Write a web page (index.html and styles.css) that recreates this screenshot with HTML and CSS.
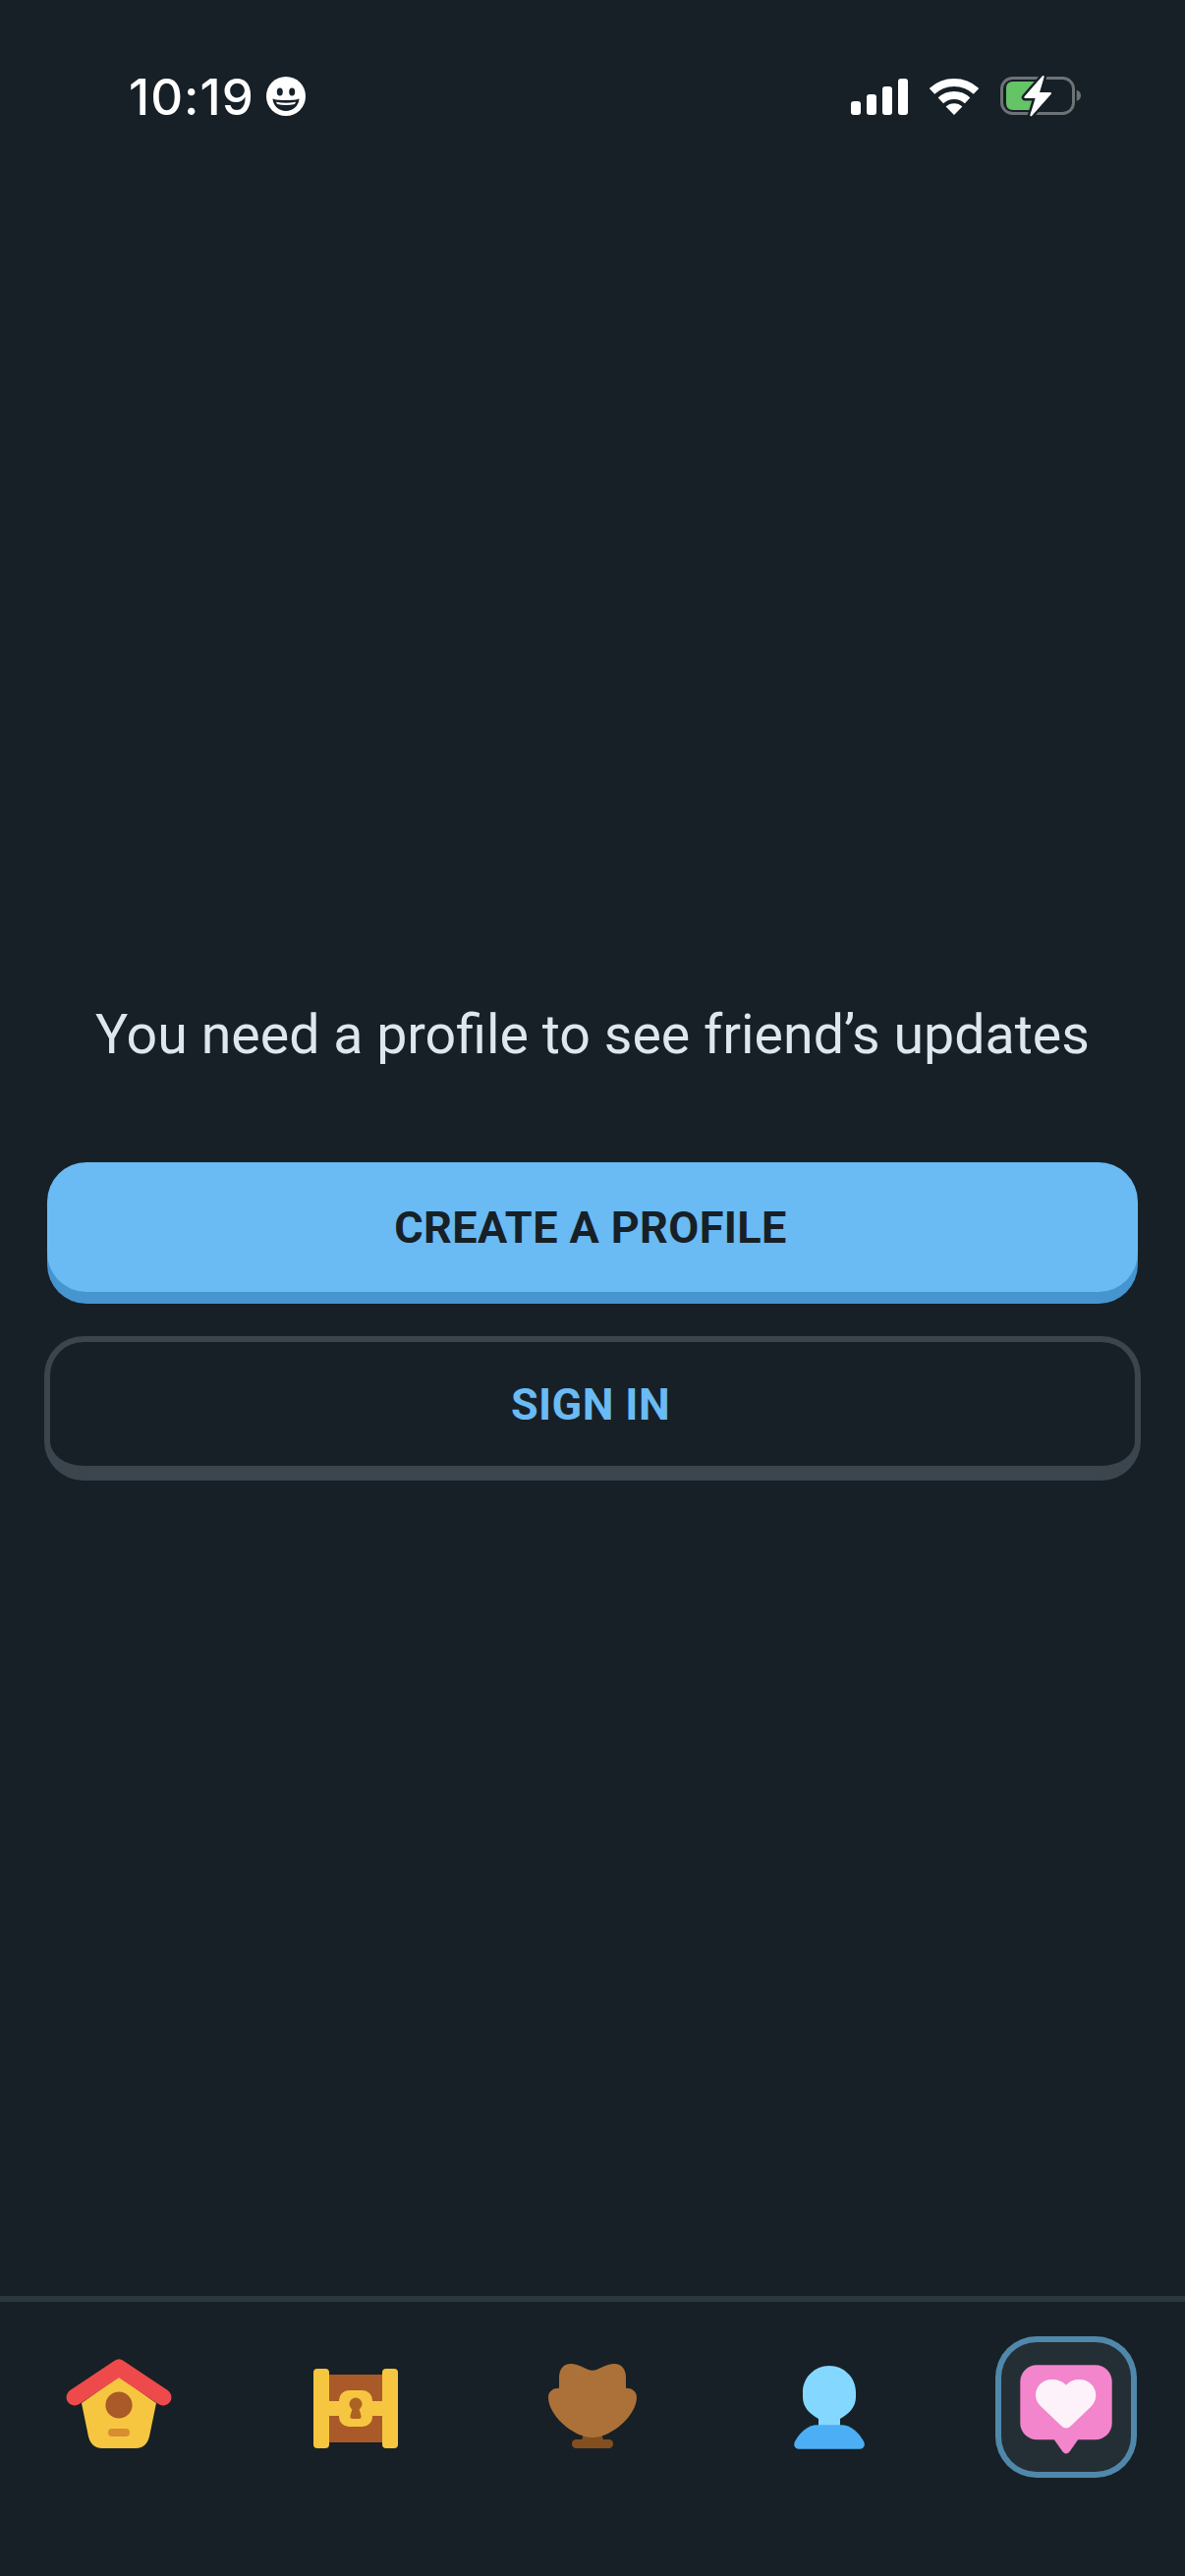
FILE: index.html
```html
<!DOCTYPE html>
<html lang="en">
<head>
    <meta charset="UTF-8">
    <meta name="viewport" content="width=device-width, initial-scale=1.0">
    <title>Friends</title>
    <link rel="stylesheet" href="styles.css">
</head>
<body>
    <div class="screen">
        <header class="status-bar">
            <div class="status-left">
                <span class="clock">10:19</span>
                <svg class="smiley" width="40" height="40" viewBox="0 0 40 40">
                    <circle cx="20" cy="20" r="20" fill="#fff"/>
                    <ellipse cx="13.8" cy="15.5" rx="3" ry="4" fill="#172026"/>
                    <ellipse cx="26.2" cy="15.5" rx="3" ry="4" fill="#172026"/>
                    <path d="M6.5 22.5C11 24.5 29 24.5 33.5 22.5C33 30 27 35 20 35C13 35 7 30 6.5 22.5Z" fill="#172026"/>
                    <path d="M10 25.8Q20 27.6 30 25.8L29 28Q20 30 11 28Z" fill="#fff"/>
                </svg>
            </div>
            <div class="status-right">
                <svg width="58" height="37" viewBox="0 0 58 37">
                    <rect x="0" y="23" width="10" height="14" rx="3" fill="#fff"/>
                    <rect x="16" y="16" width="10" height="21" rx="3" fill="#fff"/>
                    <rect x="32" y="8" width="10" height="29" rx="3" fill="#fff"/>
                    <rect x="48" y="0" width="10" height="37" rx="3" fill="#fff"/>
                </svg>
                <svg width="50" height="37" viewBox="0 0 50 37">
                    <path d="M2.5 12.9A33 33 0 0 1 47.5 12.9" fill="none" stroke="#fff" stroke-width="8"/>
                    <path d="M11.4 22.4A20 20 0 0 1 38.6 22.4" fill="none" stroke="#fff" stroke-width="8"/>
                    <path d="M25 37L16.6 28.6A11.9 11.9 0 0 1 33.4 28.6Z" fill="#fff"/>
                </svg>
                <svg class="battery" width="82" height="40" viewBox="0 0 82 40">
                    <rect x="1.5" y="1.5" width="73" height="36" rx="11" fill="none" stroke="#6c7276" stroke-width="3"/>
                    <path d="M77.7 13.7C80.5 14.5 82 16.5 82 19.2C82 22 80.5 24 77.7 24.7Z" fill="#6c7276"/>
                    <path d="M6 12Q6 5 13 5H36V34H13Q6 34 6 27Z" fill="#64c466"/>
                    <path d="M43.7 0L25.3 21H37L31.3 39.3L51 17H38.7Z" fill="#172026" stroke="#172026" stroke-width="7" stroke-linejoin="round"/>
                    <path d="M43.7 0L25.3 21H37L31.3 39.3L51 17H38.7Z" fill="#fff" stroke="#fff" stroke-width="2" stroke-linejoin="round"/>
                </svg>
            </div>
        </header>

        <main class="content">
            <p class="message">You need a profile to see friend’s updates</p>
            <button class="btn btn-primary">CREATE A PROFILE</button>
            <button class="btn btn-secondary">SIGN IN</button>
        </main>

        <nav class="tab-bar">
            <div class="tab">
                <svg width="144" height="144" viewBox="0 0 144 144">
                    <path d="M34 68L72 41L110 68L103 102Q100 114 89 114H55Q44 114 41 102Z" fill="#f7c640"/>
                    <path d="M27 62L72 32L117 62" fill="none" stroke="#ee4a4c" stroke-width="17" stroke-linecap="round" stroke-linejoin="round"/>
                    <circle cx="72" cy="70" r="13.6" fill="#a95a28"/>
                    <rect x="61" y="94" width="22" height="8" rx="4" fill="#d98c30"/>
                </svg>
            </div>
            <div class="tab">
                <svg width="144" height="144" viewBox="0 0 144 144">
                    <rect x="40" y="39" width="64" height="69" fill="#a95a28"/>
                    <rect x="40" y="66" width="64" height="15" fill="#f7c640"/>
                    <rect x="29" y="33" width="16" height="81" rx="4" fill="#f7c640"/>
                    <rect x="99" y="33" width="16" height="81" rx="4" fill="#f7c640"/>
                    <rect x="55" y="55" width="34" height="37" rx="10" fill="#f7c640"/>
                    <circle cx="72" cy="69" r="6.5" fill="#ac6322"/>
                    <path d="M69 72H75L77.5 81Q78 84 75 84H69Q66 84 66.5 81Z" fill="#ac6322"/>
                </svg>
            </div>
            <div class="tab">
                <svg width="144" height="144" viewBox="0 0 144 144">
                    <path d="M63.5 96H80.5L83 106H61Z" fill="#844f1e"/>
                    <rect x="51" y="105" width="42" height="9" rx="4.5" fill="#844f1e"/>
                    <path d="M72 34.7C66 34.7 58 28 50 28C42 28 38 34 38 42V52.7C32 52.7 27 56 27 62C27 80 52 103 72 103C92 103 117 80 117 62C117 56 112 52.7 106 52.7V42C106 34 102 28 94 28C86 28 78 34.7 72 34.7Z" fill="#ac7138"/>
                </svg>
            </div>
            <div class="tab">
                <svg width="144" height="144" viewBox="0 0 144 144">
                    <path d="M72 30C57 30 45 42 45 57V62C45 72 52 79 61 84V92H83V84C92 79 99 72 99 62V57C99 42 87 30 72 30Z" fill="#84d8ff"/>
                    <path d="M60 90.3H84C94 90.3 102 98 107 107C109 111 107 114.7 103 114.7H41C37 114.7 35 111 37 107C42 98 50 90.3 60 90.3Z" fill="#4cafF5"/>
                </svg>
            </div>
            <div class="tab tab-active">
                <svg width="144" height="144" viewBox="0 0 144 144">
                    <rect x="25.3" y="29.3" width="93.4" height="76" rx="17" fill="#f285cc"/>
                    <path d="M59.7 105L68.5 117.5Q72 121.5 75.5 117.5L84.3 105Z" fill="#f285cc"/>
                    <path d="M72 49.7C75 46 80 44 86 44C95 44 102.3 51 102.3 60C102.3 65 100 69 97 72L77 91Q72 96 67 91L47 72C44 69 41 65 41 60C41 51 48 44 57 44C63 44 69 46 72 49.7Z" fill="#fef2fa"/>
                </svg>
            </div>
        </nav>
    </div>
</body>
</html>
```

FILE: styles.css
```css
body {
    margin: 0;
    background: #172026;
}
.screen {
    width: 1206px;
    height: 2622px;
    display: flex;
    flex-direction: column;
    overflow: hidden;
}

/* status bar */
.status-bar {
    height: 196px;
    box-sizing: border-box;
    padding: 0 106px 0 131px;
    display: flex;
    justify-content: space-between;
    align-items: center;
}
.status-left {
    display: flex;
    align-items: center;
    gap: 12px;
}
.clock {
    font-family: Inter, sans-serif;
    font-size: 51px;
    font-weight: 500;
    letter-spacing: 1px;
    color: #fff;
}
.status-right {
    display: flex;
    align-items: center;
    gap: 22px;
}
.battery {
    overflow: visible;
}

/* middle */
.content {
    flex: 1;
    padding: 822px 45px 0;
    display: flex;
    flex-direction: column;
}
.message {
    margin: 0 0 93px;
    font-family: Roboto, sans-serif;
    font-size: 55.5px;
    line-height: 72px;
    color: #dfe6ee;
    text-align: center;
}
.btn {
    padding: 0 4px 0 0;
    font-family: Roboto, sans-serif;
    font-size: 45px;
    font-weight: 700;
    letter-spacing: 0.4px;
    border-radius: 40px;
}
.btn-primary {
    height: 132px;
    margin: 0 3px 45px;
    border: none;
    background: #6abaf4;
    color: #172026;
    box-shadow: 0 12px 0 #4695d0;
}
.btn-secondary {
    height: 147px;
    border: 6px solid #3b454d;
    border-bottom-width: 15px;
    background: transparent;
    color: #6abaf4;
}

/* bottom tabs */
.tab-bar {
    height: 285px;
    box-sizing: border-box;
    border-top: 6px solid #2b383e;
    padding-top: 35px;
    display: grid;
    grid-template-columns: repeat(5, 1fr);
    justify-items: center;
    align-items: start;
}
.tab {
    width: 144px;
    height: 144px;
    border-radius: 42px;
}
.tab svg {
    display: block;
}
.tab-active {
    background: #242f35;
    box-shadow: inset 0 0 0 6px #5088ab;
}
```
